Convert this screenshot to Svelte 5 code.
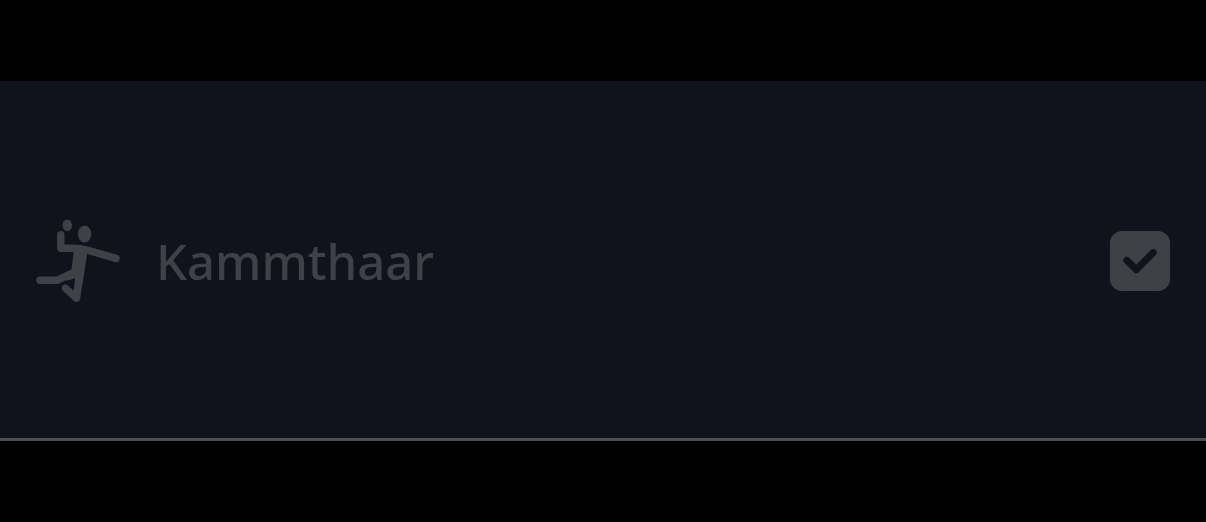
<script>
  let selected = $state(true);
</script>

<main>
  <label class="row">
    <svg class="sport" viewBox="0 0 84 84" aria-hidden="true">
      <ellipse cx="31.3" cy="6.4" rx="4.7" ry="5.9" />
      <ellipse cx="48.6" cy="15" rx="6.7" ry="8.6" />
      <path class="limb" d="M24.8 15.7V29.2H37Q44 29.2 51 31L80 39.4" />
      <path class="limb" d="M4 61.3H21L39.5 52.5" />
      <path class="limb" d="M29.5 69.3L40.5 79.2L47.5 34" />
      <path d="M38 31H51.5L46 67L38 72L39 59.2L30 62L35.5 50.5Z" />
    </svg>
    <span class="name">Kammthaar</span>
    <span class="check">
      <input type="checkbox" bind:checked={selected} />
      {#if selected}
        <svg viewBox="0 0 60 60" aria-hidden="true">
          <path d="M16.8 29.4L26.4 38.6L43.2 21.6" />
        </svg>
      {/if}
    </span>
  </label>
</main>

<style>
  :global(body) {
    margin: 0;
    background: #000;
  }

  main {
    padding: 81px 0;
  }

  .row {
    box-sizing: border-box;
    display: flex;
    align-items: center;
    gap: 36px;
    min-height: 360px;
    padding: 3px 36px 0;
    border-bottom: 3px solid #4b4d54;
    background: #10131b;
    color: #3f4148;
    cursor: pointer;
  }

  .sport {
    flex: none;
    width: 84px;
    height: 84px;
    fill: currentColor;
  }

  .limb {
    fill: none;
    stroke: currentColor;
    stroke-width: 7.4;
    stroke-linecap: round;
    stroke-linejoin: round;
  }

  .name {
    flex: 1;
    font: 500 49px/70px "Noto Sans", "Open Sans", sans-serif;
  }

  .check {
    position: relative;
    flex: none;
    display: flex;
  }

  input {
    appearance: none;
    width: 60px;
    height: 60px;
    margin: 0;
    border-radius: 12px;
    background: #3f4148;
    cursor: pointer;
  }

  .check svg {
    position: absolute;
    inset: 0;
    fill: none;
    stroke: #10131b;
    stroke-width: 7;
    stroke-linecap: round;
    stroke-linejoin: round;
    pointer-events: none;
  }
</style>
